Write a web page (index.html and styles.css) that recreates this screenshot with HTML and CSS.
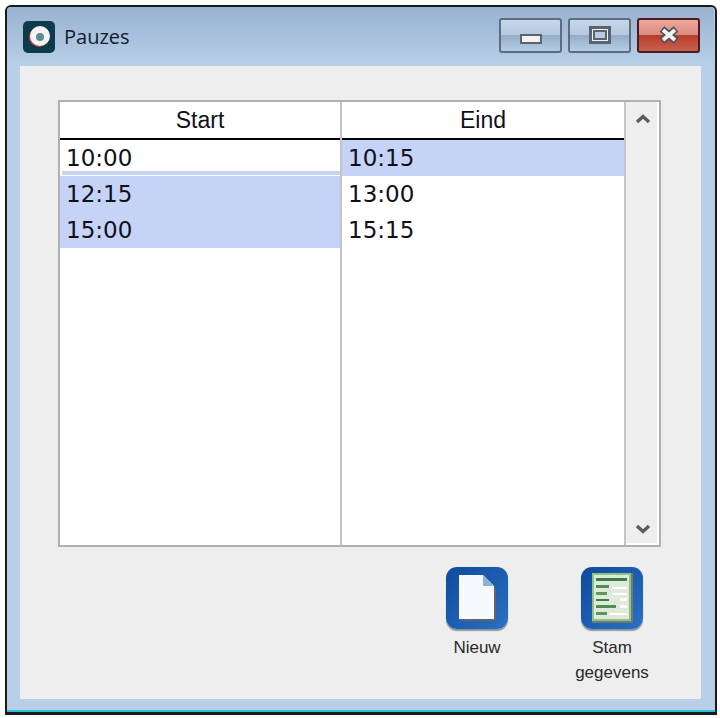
FILE: index.html
```html
<!DOCTYPE html>
<html lang="en">

<head>
    <title>Pauzes</title>
    <link rel="stylesheet" href="styles.css">
</head>

<body>
    <div class="window">
        <div class="titlebar">
            <svg class="app-icon" width="32" height="32" viewBox="0 0 32 32">
                <rect width="32" height="32" rx="5" fill="#0e3b4a" />
                <circle cx="16" cy="16" r="10" fill="#b8434a" />
                <circle cx="17" cy="15" r="10" fill="#f4f6f6" />
                <circle cx="17" cy="16" r="4" fill="#5f8b95" />
            </svg>
            <div class="title">Pauzes</div>
            <div class="window-buttons">
                <div class="win-btn">
                    <div class="min-glyph"></div>
                </div>
                <div class="win-btn">
                    <div class="max-glyph"></div>
                </div>
                <div class="win-btn win-close">
                    <svg width="24" height="18" viewBox="0 0 24 18">
                        <path d="M5 3 L19 15 M19 3 L5 15" stroke="#4a4f58" stroke-width="7" />
                        <path d="M6 4 L18 14 M18 4 L6 14" stroke="#f2f2f2" stroke-width="4" />
                    </svg>
                </div>
            </div>
        </div>

        <div class="client">
            <div class="grid">
                <div class="col col-start">
                    <div class="col-header">Start</div>
                    <div class="row row-focus">10:00</div>
                    <div class="row selected">12:15</div>
                    <div class="row selected">15:00</div>
                </div>
                <div class="col">
                    <div class="col-header">Eind</div>
                    <div class="row selected">10:15</div>
                    <div class="row">13:00</div>
                    <div class="row">15:15</div>
                </div>
                <div class="scrollbar">
                    <svg width="16" height="12" viewBox="0 0 16 12">
                        <path d="M2 9 L8 3.5 L14 9" fill="none" stroke="#5c5c5c" stroke-width="3.4" />
                    </svg>
                    <svg width="16" height="12" viewBox="0 0 16 12">
                        <path d="M2 3 L8 8.5 L14 3" fill="none" stroke="#5c5c5c" stroke-width="3.4" />
                    </svg>
                </div>
            </div>

            <div class="actions">
                <div class="action action-new">
                    <div class="action-icon">
                        <svg width="62" height="62" viewBox="0 0 62 62">
                            <path d="M13 8 H37 L49 20 V53 H13 Z" fill="#5d6570" transform="translate(1 1)" />
                            <path d="M13 8 H37 L48 19 V52 H13 Z" fill="#f6f9fe" />
                            <path d="M37 8 L48 19 H37 Z" fill="#8fb2d6" />
                        </svg>
                    </div>
                    <div class="action-label">Nieuw</div>
                </div>
                <div class="action action-data">
                    <div class="action-icon">
                        <svg width="62" height="62" viewBox="0 0 62 62">
                            <rect x="11" y="6" width="41" height="50" fill="#6f7a70" />
                            <rect x="11" y="6" width="39" height="48" fill="#8fc283" />
                            <rect x="13" y="8" width="35" height="44" fill="#dfeadb" />
                            <rect x="15" y="11" width="31" height="3" fill="#3d7c42" />
                            <rect x="15" y="18" width="13" height="3" fill="#4f8f52" />
                            <rect x="31" y="20" width="15" height="2" fill="#ffffff" />
                            <rect x="15" y="25" width="11" height="3" fill="#5c9660" />
                            <rect x="31" y="26" width="15" height="2" fill="#ffffff" />
                            <rect x="15" y="32" width="13" height="2" fill="#3d7c42" />
                            <rect x="39" y="31" width="7" height="3" fill="#ffffff" />
                            <rect x="15" y="38" width="20" height="3" fill="#4f8f52" />
                            <rect x="39" y="38" width="7" height="3" fill="#ffffff" />
                            <rect x="15" y="45" width="11" height="3" fill="#5c9660" />
                            <rect x="28" y="46" width="18" height="2" fill="#ffffff" />
                        </svg>
                    </div>
                    <div class="action-label">Stam<br>gegevens</div>
                </div>
            </div>
        </div>
    </div>
</body>

</html>
```

FILE: styles.css
```css
html,
body {
    margin: 0;
    padding: 0;
    height: 718px;
    overflow: hidden;
    background-color: #ffffff;
}

body {
    padding: 5px 0 0 5px;
    box-sizing: border-box;
    font-family: "Liberation Sans", Arial, sans-serif;
}

.window {
    width: 712px;
    height: 710px;
    box-sizing: border-box;
    border: 2px solid #1a1a1a;
    border-bottom-width: 3px;
    border-radius: 6px 6px 0 0;
    background: #b9cfe8;
    display: flex;
    flex-direction: column;
    padding: 0 14px 13px 13px;
    box-shadow: inset 0 -2px 0 #25c4d8;
}

.titlebar {
    height: 59px;
    margin: 0 -13px 0 -13px;
    padding: 0 14px 0 16px;
    display: flex;
    align-items: center;
    gap: 9px;
    background: linear-gradient(#98b2cf, #b9cfe8);
    border-radius: 4px 4px 0 0;
}

.app-icon {
    flex: none;
}

.title {
    flex-grow: 1;
    font-family: "Open Sans", sans-serif;
    font-size: 20px;
    color: #111a2e;
}

.window-buttons {
    display: flex;
    gap: 6px;
    margin-top: -3px;
}

.win-btn {
    width: 63px;
    height: 35px;
    box-sizing: border-box;
    border: 2px solid #5f6b80;
    border-radius: 3px;
    background: linear-gradient(#c6d8ea 0%, #b3c8de 50%, #95adc8 50%, #b5cde4 100%);
    display: flex;
    align-items: center;
    justify-content: center;
}

.win-close {
    border-color: #4a1a22;
    background: linear-gradient(#eba79c 0%, #dc8a7c 50%, #b83e2b 50%, #c9604e 100%);
}

.min-glyph {
    width: 22px;
    height: 10px;
    margin-top: 8px;
    box-sizing: border-box;
    border: 2px solid #5a6372;
    background: #f2f2f2;
}

.max-glyph {
    width: 22px;
    height: 18px;
    box-sizing: border-box;
    border: 3px solid #5a6372;
    background: #f2f2f2;
    display: flex;
    align-items: center;
    justify-content: center;
}

.max-glyph::after {
    content: "";
    width: 10px;
    height: 6px;
    border: 2px solid #5a6372;
    background: #b9cbdf;
}

.client {
    flex: 1;
    background-color: #eeeeee;
    padding: 34px 40px 0 38px;
    display: flex;
    flex-direction: column;
}

.grid {
    height: 447px;
    box-sizing: border-box;
    border: 2px solid #b0b0b4;
    background: white;
    display: flex;
}

.col {
    width: 282px;
    flex: none;
}

.col-start {
    border-right: 2px solid #c4c4c4;
    box-sizing: content-box;
    width: 280px;
}

.col-header {
    height: 36px;
    border-bottom: 2px solid #000000;
    text-align: center;
    font-size: 23px;
    line-height: 36px;
    color: #10101c;
}

.row {
    height: 36px;
    padding-left: 6px;
    font-family: "DejaVu Sans", sans-serif;
    font-size: 23px;
    line-height: 36px;
    color: #10101c;
}

.selected {
    background-color: #c5d4f6;
}

.row-focus {
    position: relative;
}

/* thin line under the row with the cursor */
.row-focus::after {
    content: "";
    position: absolute;
    left: 2px;
    right: 0;
    bottom: 1px;
    height: 4px;
    background-color: #c5d4f6;
}

.scrollbar {
    flex: 1;
    border-left: 2px solid #c4c4c4;
    background-color: #eeeeee;
    box-shadow: inset -2px -2px 0 #ffffff;
    display: flex;
    flex-direction: column;
    justify-content: space-between;
    align-items: center;
    padding: 11px 0 10px;
}

.actions {
    display: flex;
    justify-content: flex-end;
    padding-top: 20px;
}

.action {
    display: flex;
    flex-direction: column;
    align-items: center;
    font-size: 17px;
    line-height: 25px;
    color: #2a2a2a;
    text-align: center;
}

.action-new {
    width: 90px;
    margin-right: 40px;
}

.action-data {
    width: 100px;
    margin-right: -1px;
}

.action-icon {
    width: 62px;
    height: 62px;
    border-radius: 11px;
    background: linear-gradient(135deg, #0f4a9c, #2a70c4);
    box-shadow: 0 2px 1px #8f959c;
}

.action-label {
    margin-top: 6px;
}
```
